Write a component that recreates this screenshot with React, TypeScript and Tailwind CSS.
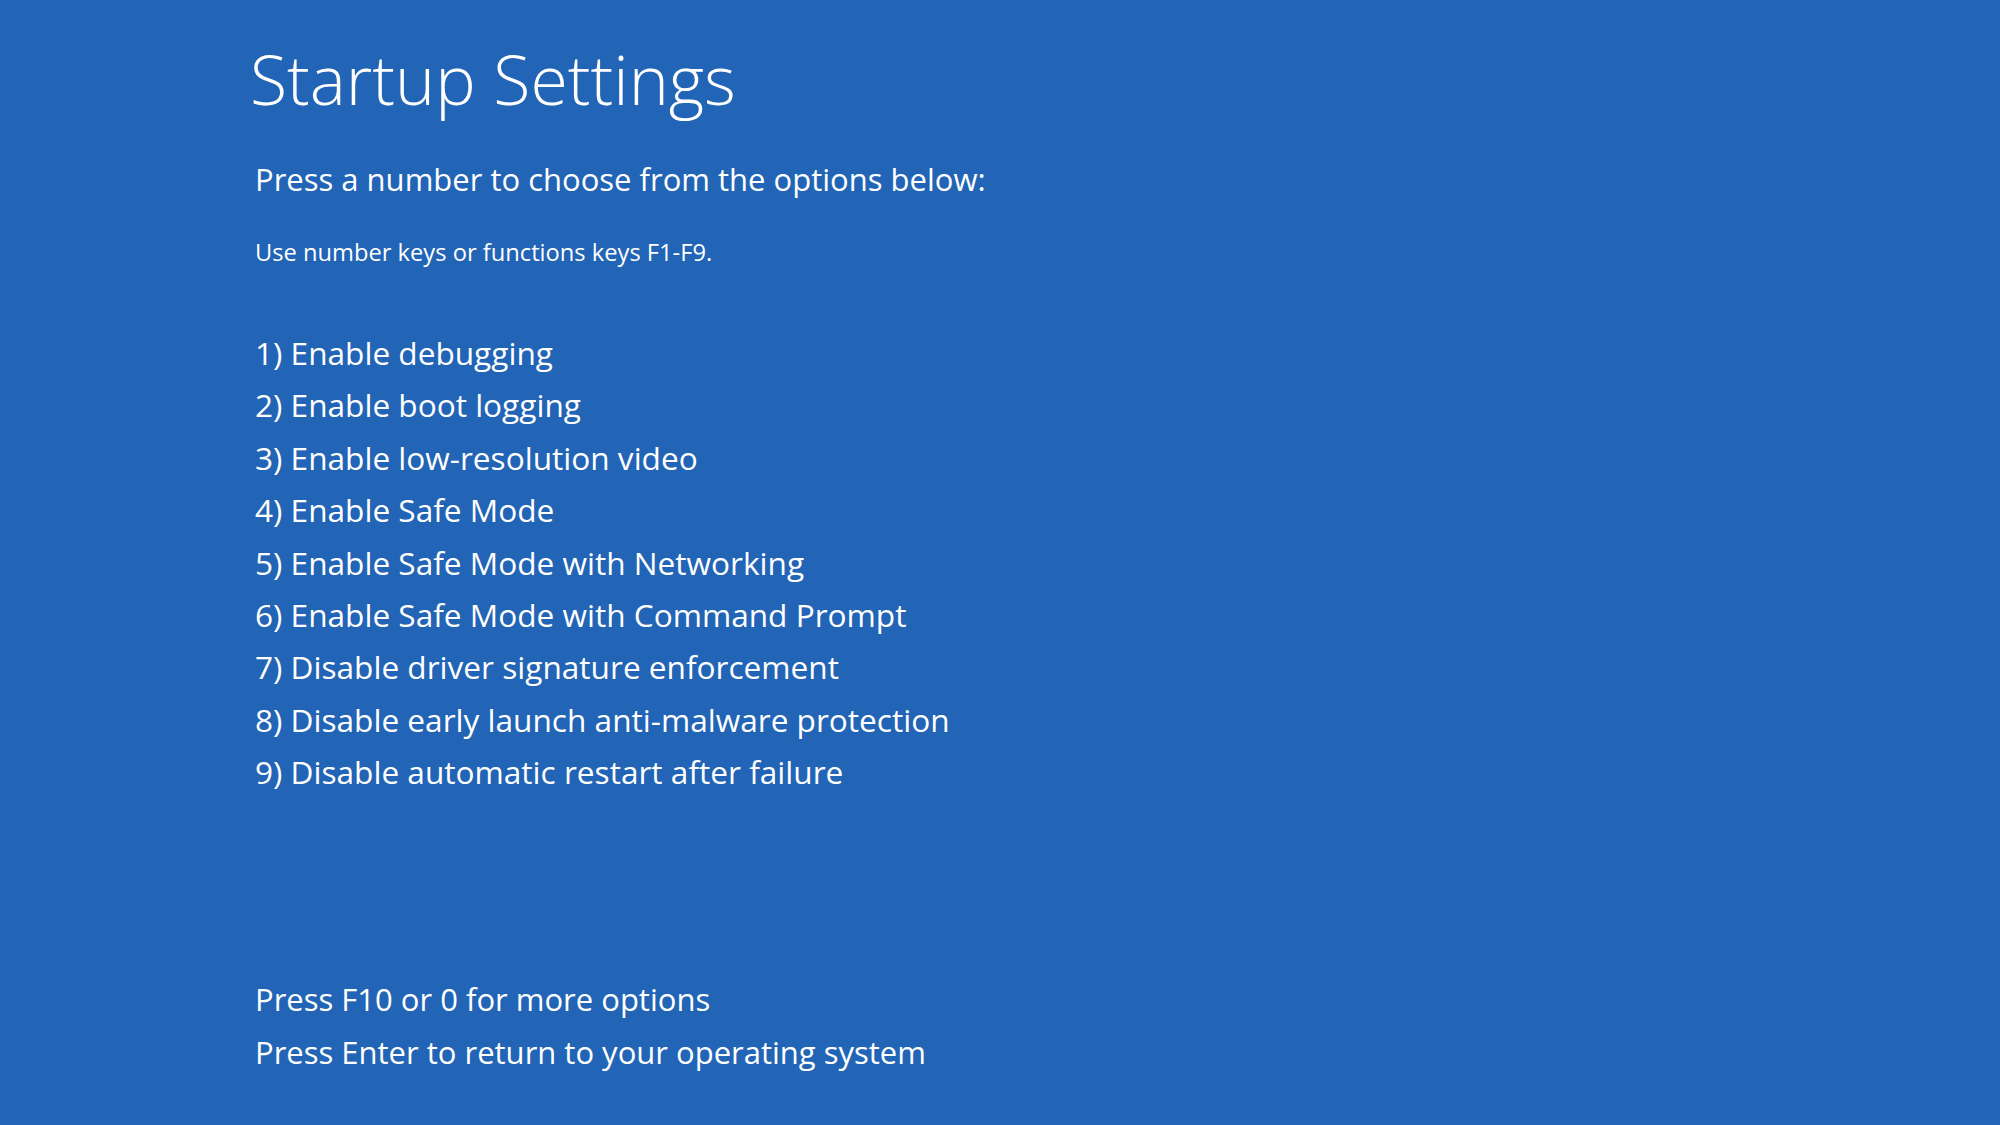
import React from 'react';

const options = [
  '1) Enable debugging',
  '2) Enable boot logging',
  '3) Enable low-resolution video',
  '4) Enable Safe Mode',
  '5) Enable Safe Mode with Networking',
  '6) Enable Safe Mode with Command Prompt',
  '7) Disable driver signature enforcement',
  '8) Disable early launch anti-malware protection',
  '9) Disable automatic restart after failure',
];

const App: React.FC = () => {
  return (
    <div
      className="w-[2000px] h-[1125px] overflow-hidden bg-[#2264b5] text-white pl-[255px] flex flex-col"
      style={{ fontFamily: '"Open Sans", "Noto Sans", sans-serif' }}
    >
      <h1 className="text-[68px] font-light leading-[80px] mt-[39px] -ml-[5px]">Startup Settings</h1>
      <p className="text-[31px] leading-[40px] mt-[40px]">Press a number to choose from the options below:</p>
      <p className="text-[23.7px] leading-[30px] mt-[38px]">Use number keys or functions keys F1-F9.</p>

      <ul className="mt-[60px] flex flex-col">
        {options.map((opt) => (
          <li key={opt} className="text-[31.6px] leading-[52.4px]">
            {opt}
          </li>
        ))}
      </ul>

      <div className="mt-[174px] flex flex-col">
        <p className="text-[31px] leading-[53px]">Press F10 or 0 for more options</p>
        <p className="text-[31px] leading-[53px]">Press Enter to return to your operating system</p>
      </div>
    </div>
  );
};

export default App;
